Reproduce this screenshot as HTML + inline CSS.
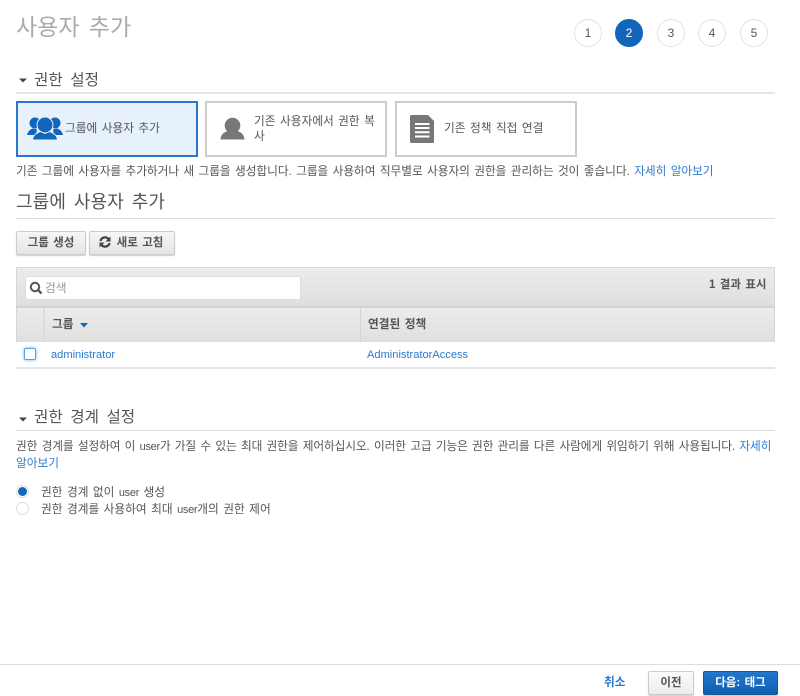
<!DOCTYPE html>
<html lang="ko"><head><meta charset="utf-8"><style>
*{box-sizing:border-box}
html,body{margin:0;padding:0;background:#fff}
body{width:800px;height:696px;position:relative;overflow:hidden;font-family:"Liberation Sans","Noto Sans CJK KR",sans-serif;font-size:11.700px;word-spacing:1.200px;color:#555;filter:blur(.3px)}
.a{position:absolute;white-space:nowrap}
.t{line-height:16px}
a{color:#2b7bd0;text-decoration:none}
.u{font-size:11px;letter-spacing:-.3px}
.h{color:#555;font-size:15.600px;word-spacing:3.200px;line-height:22px}
.r{position:absolute;left:16px;width:759px;height:1px;background:#ddd}
.s{position:absolute;top:19px;width:28px;height:28px;border-radius:50%;border:1px solid #e2e2e2;text-align:center;line-height:27px;font-size:12px;color:#555;background:#fff}
.c{position:absolute;top:101px;height:56px;border:2px solid #ccc;background:#fff}
.b{position:absolute;border:1px solid #ccc;border-radius:2px;background:linear-gradient(#f6f6f6,#e4e4e4);box-shadow:0 1px 1px #ccc;font-weight:bold;color:#555;text-align:center;font-size:11.500px}
</style></head><body>
<div class="a" style="left:16px;top:10px;font-size:23px;word-spacing:3px;line-height:34px;color:#aaa">사용자 추가</div>
<div class="s" style="left:574px">1</div>
<div class="s" style="left:615px;background:#1166bb;border-color:#1166bb;color:#fff">2</div>
<div class="s" style="left:657px">3</div>
<div class="s" style="left:698px">4</div>
<div class="s" style="left:740px">5</div>

<svg class="a" style="left:19px;top:78px" width="10" height="6"><path d="M0 0.5H8L4 4.5Z" fill="#444"/></svg>
<div class="a h" style="left:34px;top:70px">권한 설정</div>
<div class="r" style="top:92px;height:2px;background:#e4e4e4"></div>

<div class="c" style="left:16px;width:182px;background:#e6f1fb;border-color:#2a78c8"></div>
<svg class="a" style="left:27px;top:117px" width="36" height="24" viewBox="0 0 36 24" fill="#1166bb">
<circle cx="8" cy="6" r="5.500"/><circle cx="28" cy="6" r="5.500"/><path d="M0 18c1-4 3-5.500 6-6.500l4 1-1 5.500z"/><path d="M36 18c-1-4-3-5.500-6-6.500l-4 1 1 5.500z"/>
<circle cx="18" cy="8" r="8" stroke="#e6f1fb" stroke-width="1"/><path d="M5.500 23c.5-5 4-7 8-8.500l4.500 2 4.500-2c4 1.500 7.500 3.500 8 8.500z" stroke="#e6f1fb" stroke-width="1"/></svg>
<div class="a t" style="left:65px;top:121px">그룹에 사용자 추가</div>

<div class="c" style="left:205px;width:182px"></div>
<svg class="a" style="left:220px;top:117px" width="25" height="24" viewBox="0 0 25 24" fill="#777"><circle cx="12.500" cy="8.500" r="7.800"/><path d="M0.500 22.500c.5-5 3-7 7-8.500l5 2 5-2c4 1.500 6.500 3.500 7 8.500z"/></svg>
<div class="a" style="left:254px;top:115px;line-height:14.500px">기존 사용자에서 권한 복<br>사</div>

<div class="c" style="left:395px;width:182px"></div>
<svg class="a" style="left:410px;top:115px" width="25" height="28" viewBox="0 0 25 28"><path d="M1.500 0H18L24 6V26.500a1.500 1.500 0 0 1-1.500 1.500H1.500a1.500 1.500 0 0 1-1.500-1.500V1.500a1.500 1.500 0 0 1 1.500-1.500Z" fill="#777"/><path d="M5 9H19.500M5 13H19.500M5 17.300H19.500M5 21.500H19.500" stroke="#fff" stroke-width="2"/></svg>
<div class="a t" style="left:444px;top:121px">기존 정책 직접 연결</div>

<div class="a t" style="left:16px;top:164px;letter-spacing:-.05px">기존 그룹에 사용자를 추가하거나 새 그룹을 생성합니다. 그룹을 사용하여 직무별로 사용자의 권한을 관리하는 것이 좋습니다. <a>자세히 알아보기</a></div>

<div class="a h" style="left:16px;top:191px;font-size:18px;letter-spacing:.1px;word-spacing:2.800px;color:#555">그룹에 사용자 추가</div>
<div class="r" style="top:218px"></div>

<div class="b" style="left:16px;top:231px;width:70px;height:24px;line-height:22px">그룹 생성</div>
<div class="b" style="left:89px;top:231px;width:86px;height:24px;line-height:22px;padding-left:16px">새로 고침</div>
<svg class="a" style="left:99px;top:236px" width="12" height="12" viewBox="0 0 12 12" fill="none" stroke="#444" stroke-width="2.300"><path d="M1.500 5A4.600 4.600 0 0 1 9.500 3"/><path d="M10.500 7A4.600 4.600 0 0 1 2.500 9"/><path d="M11.500 0.500V5.500H6.500Z" fill="#444" stroke="none"/><path d="M0.500 11.500V6.500H5.500Z" fill="#444" stroke="none"/></svg>

<div class="a" style="left:16px;top:267px;width:759px;height:41px;background:linear-gradient(#ececec,#dedede);border:1px solid #d6d6d6;border-bottom:2px solid #d2d2d2"></div>
<div class="a" style="left:25px;top:276px;width:276px;height:24px;background:#fff;border:1px solid #ddd;border-radius:3px"></div>
<svg class="a" style="left:29px;top:281px" width="14" height="14" viewBox="0 0 14 14" fill="none" stroke="#555" stroke-width="2"><circle cx="6" cy="6" r="4.200"/><path d="M9 9L12.500 12.500" stroke-width="2.400"/></svg>
<div class="a t" style="left:45px;top:281px;color:#999">검색</div>
<div class="a t" style="left:709px;top:277px;font-weight:bold;color:#555;font-size:11.500px">1 결과 표시</div>

<div class="a" style="left:16px;top:308px;width:759px;height:34px;background:linear-gradient(#ececec,#dfdfdf);border:1px solid #d6d6d6;border-width:0 1px"></div>
<div class="a" style="left:43px;top:308px;width:2px;height:34px;background:#dcdcdc"></div>
<div class="a" style="left:360px;top:308px;width:1px;height:34px;background:#d4d4d4"></div>
<div class="a t" style="left:52px;top:317px;font-weight:bold;color:#555">그룹</div>
<svg class="a" style="left:80px;top:323px" width="8" height="5"><path d="M0 0H8L4 4.500Z" fill="#1166bb"/></svg>
<div class="a t" style="left:368px;top:317px;font-weight:bold;color:#555">연결된 정책</div>

<div class="a" style="left:24px;top:348px;width:12px;height:12px;border:1px solid #5a9fe0;border-radius:2px;background:#fff;box-shadow:0 0 3px #6aaee8"></div>
<a class="a t" style="left:51px;top:347px;font-size:11.100px">administrator</a>
<a class="a t" style="left:367px;top:347px;font-size:11.100px">AdministratorAccess</a>
<div class="r" style="top:367px;height:2px;background:#e6e6e6"></div>

<svg class="a" style="left:19px;top:417px" width="10" height="6"><path d="M0 0.500H8L4 4.500Z" fill="#444"/></svg>
<div class="a h" style="left:34px;top:407px">권한 경계 설정</div>
<div class="r" style="top:430px"></div>

<div class="a t" style="left:16px;top:439px;letter-spacing:-.12px">권한 경계를 설정하여 이 <span class="u">user</span>가 가질 수 있는 최대 권한을 제어하십시오. 이러한 고급 기능은 권한 관리를 다른 사람에게 위임하기 위해 사용됩니다. <a>자세히</a></div>
<a class="a t" style="left:16px;top:456px">알아보기</a>

<div class="a" style="left:16px;top:485px;width:13px;height:13px;border-radius:50%;background:#fff;border:1px solid #ddd"></div>
<div class="a" style="left:18px;top:487px;width:9px;height:9px;border-radius:50%;background:#1166bb"></div>
<div class="a t" style="left:41px;top:485px">권한 경계 없이 <span class="u">user</span> 생성</div>
<div class="a" style="left:16px;top:502px;width:13px;height:13px;border-radius:50%;background:#fff;border:1px solid #ddd"></div>
<div class="a t" style="left:41px;top:502px">권한 경계를 사용하여 최대 <span class="u">user</span>개의 권한 제어</div>

<div class="a" style="left:0;top:664px;width:800px;height:1px;background:#ddd"></div>
<a class="a t" style="left:604px;top:675px;font-weight:bold">취소</a>
<div class="b" style="left:648px;top:671px;width:46px;height:24px;line-height:22px;background:linear-gradient(#fafafa,#ececec)">이전</div>
<div class="b" style="left:703px;top:671px;width:75px;height:24px;line-height:22px;background:linear-gradient(#2277cc,#0f5fb0);border-color:#0f5aa8;color:#fff">다음: 태그</div>
</body></html>
